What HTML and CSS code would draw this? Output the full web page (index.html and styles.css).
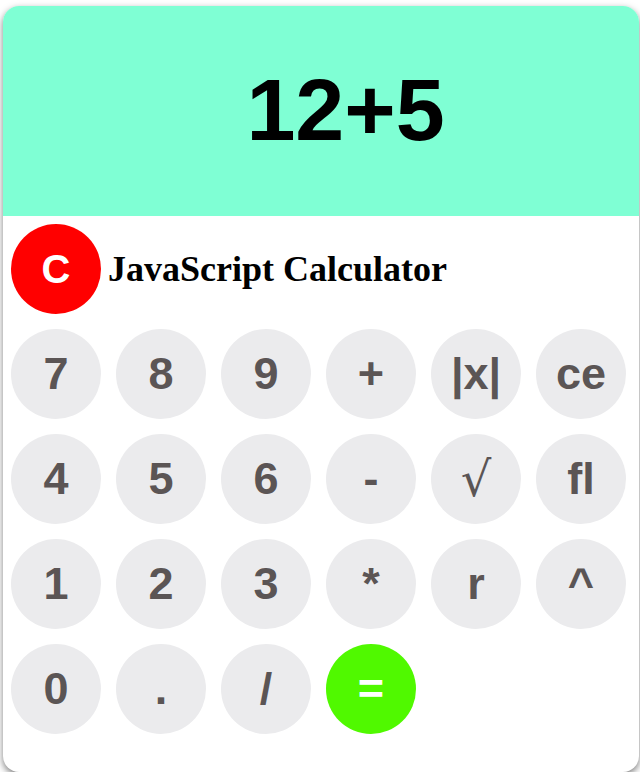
FILE: index.html
```html
<!DOCTYPE html>
<html>
<head>
<meta charset="utf-8">
<title>JavaScript Calculator</title>
<link rel="stylesheet" href="styles.css">
</head>
<body>
<div class="calculator">
  <div class="display">12+5</div>
  <div class="keys">
    <div class="top-row">
      <button class="key key-clear">C</button>
      <h1 class="title">JavaScript Calculator</h1>
    </div>
    <div class="grid">
      <button class="key">7</button>
      <button class="key">8</button>
      <button class="key">9</button>
      <button class="key">+</button>
      <button class="key">|x|</button>
      <button class="key">ce</button>
      <button class="key">4</button>
      <button class="key">5</button>
      <button class="key">6</button>
      <button class="key">-</button>
      <button class="key key-sqrt">√</button>
      <button class="key">fl</button>
      <button class="key">1</button>
      <button class="key">2</button>
      <button class="key">3</button>
      <button class="key">*</button>
      <button class="key">r</button>
      <button class="key">^</button>
      <button class="key">0</button>
      <button class="key">.</button>
      <button class="key">/</button>
      <button class="key key-equals">=</button>
    </div>
  </div>
</div>
</body>
</html>
```
FILE: styles.css
```css
html, body {
  margin: 0;
  padding: 0;
  background: #ffffff;
}

body {
  padding: 6px 0 0 3px;
  font-family: "Liberation Sans", Arial, sans-serif;
}

.calculator {
  width: 636px;
  height: 766px;
  background: #ffffff;
  border-radius: 16px;
  overflow: hidden;
  box-shadow: 0 3px 7px rgba(0, 0, 0, 0.5);
  box-sizing: border-box;
}

.display {
  height: 210px;
  background: #7fffd4;
  color: #000000;
  font-weight: bold;
  font-size: 88px;
  line-height: 208px;
  text-align: center;
  padding-left: 49px;
  box-sizing: border-box;
}

.keys {
  padding: 8px 8px 38px 8px;
}

.top-row {
  display: flex;
  align-items: center;
}

.title {
  margin: 0 0 0 7px;
  font-family: "Liberation Serif", "Times New Roman", serif;
  font-size: 36px;
  font-weight: bold;
  color: #000000;
}

.grid {
  margin-top: 15px;
  display: grid;
  grid-template-columns: repeat(6, 90px);
  grid-auto-rows: 90px;
  gap: 15px;
}

.key {
  width: 90px;
  height: 90px;
  border: none;
  border-radius: 50%;
  padding: 0;
  background: #ebebed;
  color: #5b5555;
  font-family: "Liberation Sans", Arial, sans-serif;
  font-weight: bold;
  font-size: 45px;
  line-height: 90px;
  text-align: center;
}

.key-clear {
  background: #ff0000;
  color: #ffffff;
  font-size: 40px;
  flex: none;
}

.key-equals {
  background: #50f900;
  color: #ffffff;
}

.key-sqrt {
  font-family: "DejaVu Serif", serif;
  font-weight: normal;
  font-size: 48px;
}
```
